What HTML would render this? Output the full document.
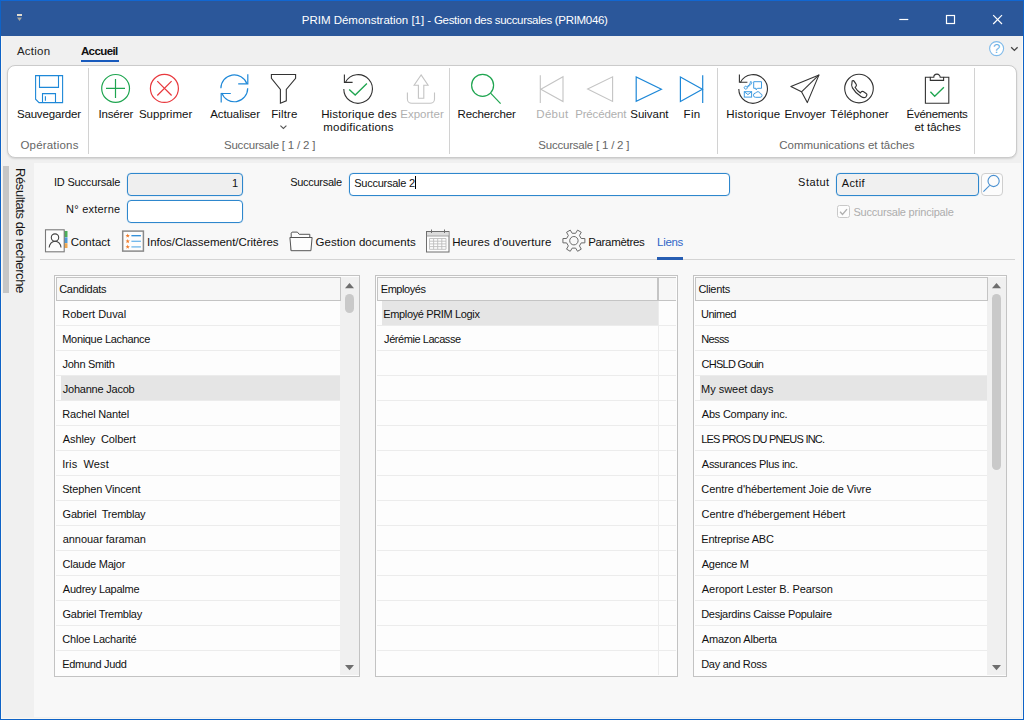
<!DOCTYPE html>
<html lang="fr"><head><meta charset="utf-8"><title>PRIM Démonstration [1] - Gestion des succursales (PRIM046)</title>
<style>
html,body{margin:0;padding:0;}
body{width:1024px;height:720px;overflow:hidden;position:relative;background:#f0f0f0;font-family:"Liberation Sans",sans-serif;}
.a{position:absolute;box-sizing:border-box;}
.t{position:absolute;white-space:pre;font-family:"Liberation Sans",sans-serif;}
svg{position:absolute;overflow:visible;}
.sep{position:absolute;top:68px;height:86px;width:1px;background:#d2d2d2;}
.inp{position:absolute;box-sizing:border-box;border:1px solid #2e87cd;border-radius:4px;height:23px;box-shadow:0 0 0 0.5px rgba(46,135,205,.14);}
.box{position:absolute;box-sizing:border-box;border:1px solid #c3c3c3;background:#fdfdfd;top:275px;height:402px;}
.hdr{position:absolute;box-sizing:border-box;border:1px solid #c4c4c4;background:#f7f7f7;top:277px;height:24px;}
.rl{position:absolute;height:1px;background:#ececec;}
.sel{position:absolute;height:24px;background:#e5e5e5;}
.trk{position:absolute;background:#f0f0f0;top:277px;height:398px;width:18px;}
.thumb{position:absolute;background:#c9c9c9;border-radius:5px;width:9px;}
</style></head><body>
<!-- window chrome -->
<div class="a" style="left:0;top:0;width:1024px;height:36px;background:#2b579a;"></div>
<div class="a" style="left:0;top:36px;width:1024px;height:684px;background:#f0f0f0;"></div>
<!-- content area -->
<div class="a" style="left:34px;top:163px;width:987px;height:554px;background:#f8f8f8;"></div>
<div class="a" style="left:1px;top:36px;width:1022px;height:683px;border:1px solid #fbf8f1;border-top:none;"></div>
<div class="a" style="left:3px;top:166px;width:6px;height:127px;background:#c6c6c6;"></div>
<!-- ribbon panel -->
<div class="a" style="left:7px;top:65px;width:1010px;height:93px;background:#fff;border:1px solid #cbcbcb;border-radius:8px;box-shadow:0 1px 2px rgba(0,0,0,.13);"></div>
<div class="sep" style="left:88px"></div><div class="sep" style="left:449px"></div><div class="sep" style="left:717px"></div><div class="sep" style="left:974px"></div>
<!-- tab underline -->
<div class="a" style="left:81px;top:60px;width:38px;height:2px;background:#185abd;"></div>
<!-- form inputs -->
<div class="inp" style="left:127px;top:173px;width:116px;background:#efefef;"></div>
<div class="inp" style="left:127px;top:200px;width:116px;background:#fff;"></div>
<div class="inp" style="left:349px;top:173px;width:381px;background:#fff;"></div>
<div class="a caret" style="left:415px;top:176px;width:1px;height:13px;background:#000;"></div>
<div class="inp" style="left:836px;top:173px;width:143px;background:#f0f0f0;"></div>
<div class="a" style="left:981px;top:173px;width:22px;height:23px;background:#fcfcfc;border:1px solid #cfcfcf;border-radius:4px;"></div>
<!-- checkbox -->
<div class="a" style="left:837px;top:205px;width:13px;height:13px;background:#fdfdfd;border:1px solid #c9c9c9;border-radius:2.500px;"></div>
<!-- tab strip line -->
<div class="a" style="left:40px;top:259px;width:975px;height:1px;background:#d4d4d4;"></div>
<div class="a" style="left:657px;top:257px;width:26px;height:3px;background:#265db2;"></div>
<!-- lists -->
<div class="box" style="left:54px;width:306px;"></div>
<div class="box" style="left:375px;width:303px;"></div>
<div class="box" style="left:693px;width:314px;"></div>
<div class="rl" style="left:56px;width:285px;top:325px"></div>
<div class="rl" style="left:56px;width:285px;top:350px"></div>
<div class="rl" style="left:56px;width:285px;top:375px"></div>
<div class="rl" style="left:56px;width:285px;top:400px"></div>
<div class="rl" style="left:56px;width:285px;top:425px"></div>
<div class="rl" style="left:56px;width:285px;top:450px"></div>
<div class="rl" style="left:56px;width:285px;top:475px"></div>
<div class="rl" style="left:56px;width:285px;top:500px"></div>
<div class="rl" style="left:56px;width:285px;top:525px"></div>
<div class="rl" style="left:56px;width:285px;top:550px"></div>
<div class="rl" style="left:56px;width:285px;top:575px"></div>
<div class="rl" style="left:56px;width:285px;top:600px"></div>
<div class="rl" style="left:56px;width:285px;top:625px"></div>
<div class="rl" style="left:56px;width:285px;top:650px"></div>
<div class="rl" style="left:377px;width:299px;top:325px"></div>
<div class="rl" style="left:377px;width:299px;top:350px"></div>
<div class="rl" style="left:377px;width:299px;top:375px"></div>
<div class="rl" style="left:377px;width:299px;top:400px"></div>
<div class="rl" style="left:377px;width:299px;top:425px"></div>
<div class="rl" style="left:377px;width:299px;top:450px"></div>
<div class="rl" style="left:377px;width:299px;top:475px"></div>
<div class="rl" style="left:377px;width:299px;top:500px"></div>
<div class="rl" style="left:377px;width:299px;top:525px"></div>
<div class="rl" style="left:377px;width:299px;top:550px"></div>
<div class="rl" style="left:377px;width:299px;top:575px"></div>
<div class="rl" style="left:377px;width:299px;top:600px"></div>
<div class="rl" style="left:377px;width:299px;top:625px"></div>
<div class="rl" style="left:377px;width:299px;top:650px"></div>
<div class="rl" style="left:695px;width:293px;top:325px"></div>
<div class="rl" style="left:695px;width:293px;top:350px"></div>
<div class="rl" style="left:695px;width:293px;top:375px"></div>
<div class="rl" style="left:695px;width:293px;top:400px"></div>
<div class="rl" style="left:695px;width:293px;top:425px"></div>
<div class="rl" style="left:695px;width:293px;top:450px"></div>
<div class="rl" style="left:695px;width:293px;top:475px"></div>
<div class="rl" style="left:695px;width:293px;top:500px"></div>
<div class="rl" style="left:695px;width:293px;top:525px"></div>
<div class="rl" style="left:695px;width:293px;top:550px"></div>
<div class="rl" style="left:695px;width:293px;top:575px"></div>
<div class="rl" style="left:695px;width:293px;top:600px"></div>
<div class="rl" style="left:695px;width:293px;top:625px"></div>
<div class="rl" style="left:695px;width:293px;top:650px"></div>
<div class="a" style="left:658px;top:301px;width:1px;height:374px;background:#ececec;"></div>
<div class="sel" style="left:61px;width:280px;top:376px"></div>
<div class="sel" style="left:382px;width:276px;top:301px"></div>
<div class="sel" style="left:700px;width:288px;top:376px"></div>
<div class="trk" style="left:340px;width:19px;"></div><div class="trk" style="left:987px;width:19px;"></div>
<div class="hdr" style="left:56px;width:285px;"></div>
<div class="hdr" style="left:377px;width:281px;"></div>
<div class="hdr" style="left:658px;width:18px;border-right:none;"></div>
<div class="hdr" style="left:695px;width:293px;"></div>
<div class="thumb" style="left:345px;top:294px;height:19px;"></div>
<div class="thumb" style="left:992px;top:294px;height:176px;"></div>
<!--ICONS_START--><svg width="1024" height="720" viewBox="0 0 1024 720" style="left:0;top:0" fill="none" stroke-width="1.1" stroke-linecap="butt" stroke-linejoin="miter">
<rect x="17" y="14" width="5" height="2" fill="#e2dccf" stroke="none"/><path d="M17 17.6h5l-2.5 3.4z" fill="#a8a8a0" stroke="none"/>
<g stroke="#fff" stroke-width="1.2"><path d="M899.3 19.5h9"/><rect x="946.5" y="15.5" width="8" height="8"/><path d="M993.2 15.2l8.8 8.8M1002 15.2l-8.8 8.8"/></g>
<circle cx="996.6" cy="48.6" r="7" stroke="#7fbaea" stroke-width="1.1" fill="#fff"/>
<path d="M1011.2 47.2l3.2 3.2l3.2-3.2" stroke="#444" stroke-width="1.3"/>
<g stroke="#1e88d8"><path d="M35.6 75.6h27v27h-23.6l-3.4-3.4z"/><path d="M39.5 75.6v11.8h19v-11.8"/><path d="M42.5 102.6v-9h13v9"/><path d="M45.4 96.2v4.6"/></g>
<g stroke="#1fa550" stroke-width="1.2"><circle cx="115.6" cy="88.4" r="13.9"/><path d="M106 88.4h19M115.5 78.9v19"/></g>
<g stroke="#e8383d" stroke-width="1.2"><circle cx="164.4" cy="88.4" r="14"/><path d="M157.3 81.1l14.3 14.4M171.6 81.1l-14.3 14.4"/></g>
<g stroke="#1e88d8" stroke-width="1.2"><path d="M220.9 88.3A13.4 13.4 0 0 1 246.9 83.7"/><path d="M247.8 74.2v9.6h-9.6"/><path d="M247.7 88.3A13.4 13.4 0 0 1 221.7 92.9"/><path d="M221.2 102.6v-9.1h9.6"/></g>
<path d="M271.4 74.5h24.2v3.8l-9.3 11.2v11.3l-5.9 2.4v-13.7l-9-11.2z" stroke="#333"/>
<path d="M280.4 125.6l3 2.9l3-2.9" stroke="#555" stroke-width="1.1"/>
<g stroke="#333"><path d="M345.4 82.4A14.3 14.3 0 1 1 343.8 88.9"/><path d="M344.4 74.4v8h8.2"/></g>
<path d="M349.2 89.4l6 5.7l11.7-11.5" stroke="#1fa550" stroke-width="1.35"/>
<g stroke="#c4c4c4"><path d="M407.4 92.4v6.5a4.4 4.4 0 0 0 4.4 4.4h18.3a4.4 4.4 0 0 0 4.4-4.4v-6.5"/><path d="M421.1 74.9l7 10.4h-4.3v12.9h-5.4v-12.9h-4.3z"/></g>
<g stroke="#1fa550" stroke-width="1.2"><circle cx="482.6" cy="85.3" r="11"/><path d="M490.6 93.2l10 10.4"/></g>
<g stroke="#c4c4c4"><path d="M540.3 75.3v27.8M563 76.8v24.8l-22.2-12.4z"/><path d="M612.6 76.8v24.6l-25-12.3z"/></g>
<g stroke="#1e88d8" stroke-width="1.2"><path d="M636.2 77v24.4l25.2-12.2z"/><path d="M680.4 77v24.4l22-12.2z"/><path d="M702.7 75.3v27.8"/></g>
<g stroke="#333"><path d="M740.4 82.4A14.3 14.3 0 1 1 738.8 88.9"/><path d="M739.4 74.4v7.9h8"/></g>
<g stroke="#3f9ce2" stroke-width="1"><path d="M750.3 81.7c1-.6 1.9.6 1.3 1.5c-1 1.9-2.6 3.2-4.6 4.3c.4 1.3-.8 2-1.9 1.5c-1-.5-1.3-1.700-.3-2.500c.7-.5 1.500-.3 2.000.2c1.800-.9 3-2.200 3.500-4z"/><path d="M753.7 81.700h7.800v6.600h-4l-1.400 1.600v-1.600h-2.400z"/><rect x="744.300" y="91.700" width="7.300" height="5.400"/><path d="M744.300 91.700l3.650 2.900l3.650-2.900"/><path d="M755.500 97.300h4.600a1.800 1.800 0 0 0 .2-3.600a2.500 2.500 0 0 0-4.700-.6a2.100 2.100 0 0 0-.1 4.200z"/></g>
<g stroke="#333" stroke-linejoin="round"><path d="M819 74.900l-28.100 11.600l10.600 5.300l5.800 10.800z"/><path d="M801.500 91.800l17.500-16.900"/></g>
<g stroke="#333"><circle cx="859" cy="88.600" r="14.300"/><path transform="translate(859.2 88.400) scale(1.040 1.090) translate(-859.2 -88.400) translate(0 1.300)" d="M852.200 82.400c-.6 1.300-.4 2.700.5 4.200c1.700 2.900 4.600 5.800 8.200 8c1.800 1.100 3.500 1.300 4.600.5l.9-1.500c.4-.7.200-1.500-.5-1.900l-2.800-1.700c-.7-.4-1.500-.3-2 .3l-.8.900c-2.100-1.200-3.900-3-5.100-5.100l.9-.9c.5-.6.600-1.400.1-2l-1.800-2.600c-.5-.7-1.400-.8-2-.3z"/></g>
<g stroke="#333"><path d="M930.300 77.300h-4.900v25.900h23.400v-25.900h-5.200"/><path d="M930.300 77.300v3.100h13.300v-3.100h-3.400a3.200 3.200 0 0 0-6.400 0z"/></g>
<path d="M930.400 91.700l4.300 4.600l9.200-9.100" stroke="#1fa550" stroke-width="1.350"/>
<g stroke="#4a90d0" stroke-width="1.100"><circle cx="993.600" cy="181" r="5.600"/><path d="M989.700 185.300l-6.300 6.300"/></g>
<path d="M840.100 211.800l2.400 2.600l4.500-5.300" stroke="#b0b0b0" stroke-width="1.400"/>
<rect x="64" y="231" width="3.500" height="6" fill="#4cae5a" stroke="none"/><rect x="64" y="237.300" width="3.500" height="5.700" fill="#4f9bd8" stroke="none"/><rect x="64" y="243.200" width="3.500" height="4.800" fill="#f0a850" stroke="none"/>
<rect x="45.500" y="229.800" width="18.700" height="22" fill="#fdfdfd" stroke="#7a7a7a" stroke-width="1.100"/>
<g stroke="#444" stroke-width="1.100"><circle cx="55" cy="237.600" r="3.700"/><path d="M49.200 247.600a5.900 6.400 0 0 1 11.800 0"/></g>
<rect x="122.700" y="231.100" width="20.700" height="20" fill="#fdfdfd" stroke="#8a8a8a" stroke-width="1.500"/>
<polygon points="127.70,233.40 128.26,234.93 129.89,234.99 128.60,235.99 129.05,237.56 127.70,236.65 126.35,237.56 126.80,235.99 125.51,234.99 127.14,234.93" fill="#f07a28" stroke="none"/>
<path d="M131.400 235.7h9.500" stroke="#2b8cd8" stroke-width="1.300"/>
<polygon points="127.70,239.00 128.26,240.53 129.89,240.59 128.60,241.59 129.05,243.16 127.70,242.25 126.35,243.16 126.80,241.59 125.51,240.59 127.14,240.53" fill="#f07a28" stroke="none"/>
<path d="M131.400 241.3h9.500" stroke="#6db6ea" stroke-width="1.300"/>
<polygon points="127.70,244.60 128.26,246.13 129.89,246.19 128.60,247.19 129.05,248.76 127.70,247.85 126.35,248.76 126.80,247.19 125.51,246.19 127.14,246.13" fill="#f07a28" stroke="none"/>
<path d="M131.400 246.9h9.500" stroke="#6db6ea" stroke-width="1.300"/>
<g stroke="#555" stroke-width="1" fill="#fdfdfd"><path d="M291.200 250.500v-17.400l.9-1h5.300l1.800 2.200h10.600v3.500"/><path d="M289.900 237.500h22.200l-1.200 13.200h-19.800z"/></g>
<g><rect x="426.500" y="231.500" width="22.500" height="20.500" fill="#fdfdfd" stroke="#6e6e6e" stroke-width="1"/><rect x="427" y="232" width="21.500" height="3.800" fill="#dcdcdc" stroke="none"/><path d="M426.500 236h22.500" stroke="#8a8a8a" stroke-width="0.8"/>
<path d="M431.500 229.500v3.500M444.500 229.500v3.500" stroke="#6e6e6e" stroke-width="1"/>
<path d="M429.500 238.5h16.500M429.500 241.2h16.500M429.500 243.9h16.500M429.500 246.6h16.500M429.500 249.3h16.500M429.5 238.500v10.800M433.6 238.500v10.800M437.7 238.500v10.800M441.8 238.500v10.800M446 238.500v10.800" stroke="#bdbdbd" stroke-width="0.9"/></g>
<path d="M581.17 238.48L584.89 238.56L584.89 242.84L581.17 242.92L579.46 245.88L581.25 249.15L577.55 251.29L575.61 248.11L572.19 248.11L570.25 251.29L566.55 249.15L568.34 245.88L566.63 242.92L562.91 242.84L562.91 238.56L566.63 238.48L568.34 235.52L566.55 232.25L570.25 230.11L572.19 233.29L575.61 233.29L577.55 230.11L581.25 232.25L579.46 235.52z" stroke="#6a6a6a" stroke-width="1" stroke-linejoin="round"/><circle cx="573.9" cy="240.7" r="4.200" stroke="#6a6a6a" stroke-width="1"/>
<path d="M345.0 288.200h9l-4.500-5.200z" fill="#6e6e6e" stroke="none"/><path d="M345.0 665h9l-4.500 5.200z" fill="#6e6e6e" stroke="none"/>
<path d="M992.0 288.200h9l-4.500-5.200z" fill="#6e6e6e" stroke="none"/><path d="M992.0 665h9l-4.500 5.200z" fill="#6e6e6e" stroke="none"/>
</svg><!--ICONS_END-->
<!-- window border -->
<div class="a" style="left:0;top:0;width:1024px;height:720px;border:1px solid #0f63c7;border-top-color:#1167d2;pointer-events:none;"></div>
<span class="t" id="vt" style="left:28.1px;top:167.8px;font-size:13px;line-height:16px;color:#151515;letter-spacing:-0.4px;transform-origin:0 0;transform:rotate(90deg);">Résultats de recherche</span>
<span class="t" id="hq" style="left:992.9px;top:41.3px;font-size:13px;line-height:15px;color:#6ab0e4;">?</span>
<span class="t" style="left:301.80px;top:12.52px;font-size:11.5px;line-height:15px;color:#fff;letter-spacing:-0.016px;">PRIM Démonstration [1] -</span>
<span class="t" style="left:433.93px;top:12.52px;font-size:11.5px;line-height:15px;color:#fff;letter-spacing:-0.315px;">Gestion des succursales (PRIM046)</span>
<span class="t" style="left:16.97px;top:43.52px;font-size:11.5px;line-height:15px;color:#222;letter-spacing:0.228px;">Action</span>
<span class="t" style="left:80.92px;top:43.52px;font-size:11.5px;line-height:15px;color:#111;font-weight:700;letter-spacing:-0.592px;">Accueil</span>
<span class="t" style="left:16.89px;top:106.52px;font-size:11.5px;line-height:15px;color:#111;letter-spacing:-0.154px;">Sauvegarder</span>
<span class="t" style="left:98.43px;top:106.52px;font-size:11.5px;line-height:15px;color:#111;letter-spacing:-0.146px;">Insérer</span>
<span class="t" style="left:138.89px;top:106.52px;font-size:11.5px;line-height:15px;color:#111;letter-spacing:0.058px;">Supprimer</span>
<span class="t" style="left:210.15px;top:106.52px;font-size:11.5px;line-height:15px;color:#111;letter-spacing:-0.073px;">Actualiser</span>
<span class="t" style="left:271.15px;top:106.52px;font-size:11.5px;line-height:15px;color:#111;letter-spacing:0.128px;">Filtre</span>
<span class="t" style="left:321.15px;top:106.52px;font-size:11.5px;line-height:15px;color:#111;letter-spacing:0.156px;">Historique des</span>
<span class="t" style="left:323.23px;top:119.52px;font-size:11.5px;line-height:15px;color:#111;letter-spacing:0.267px;">modifications</span>
<span class="t" style="left:400.30px;top:106.52px;font-size:11.5px;line-height:15px;color:#b0b0b0;letter-spacing:-0.007px;">Exporter</span>
<span class="t" style="left:457.62px;top:106.52px;font-size:11.5px;line-height:15px;color:#111;letter-spacing:-0.146px;">Rechercher</span>
<span class="t" style="left:536.33px;top:106.52px;font-size:11.5px;line-height:15px;color:#b0b0b0;letter-spacing:0.288px;">Début</span>
<span class="t" style="left:575.15px;top:106.52px;font-size:11.5px;line-height:15px;color:#b0b0b0;letter-spacing:-0.154px;">Précédent</span>
<span class="t" style="left:630.24px;top:106.52px;font-size:11.5px;line-height:15px;color:#111;letter-spacing:-0.007px;">Suivant</span>
<span class="t" style="left:683.62px;top:106.52px;font-size:11.5px;line-height:15px;color:#111;letter-spacing:0.268px;">Fin</span>
<span class="t" style="left:726.15px;top:106.52px;font-size:11.5px;line-height:15px;color:#111;letter-spacing:0.257px;">Historique</span>
<span class="t" style="left:784.62px;top:106.52px;font-size:11.5px;line-height:15px;color:#111;letter-spacing:-0.175px;">Envoyer</span>
<span class="t" style="left:830.23px;top:106.52px;font-size:11.5px;line-height:15px;color:#111;letter-spacing:0.029px;">Téléphoner</span>
<span class="t" style="left:906.62px;top:106.52px;font-size:11.5px;line-height:15px;color:#111;letter-spacing:-0.296px;">Événements</span>
<span class="t" style="left:914.40px;top:119.52px;font-size:11.5px;line-height:15px;color:#111;letter-spacing:-0.046px;">et tâches</span>
<span class="t" style="left:20.43px;top:137.52px;font-size:11.5px;line-height:15px;color:#666;letter-spacing:0.192px;">Opérations</span>
<span class="t" style="left:223.95px;top:137.52px;font-size:11.5px;line-height:15px;color:#666;letter-spacing:-0.196px;">Succursale [ 1 / 2 ]</span>
<span class="t" style="left:538.25px;top:137.52px;font-size:11.5px;line-height:15px;color:#666;letter-spacing:-0.212px;">Succursale [ 1 / 2 ]</span>
<span class="t" style="left:779.22px;top:137.52px;font-size:11.5px;line-height:15px;color:#666;letter-spacing:-0.011px;">Communications et tâches</span>
<span class="t" style="left:53.88px;top:174.69px;font-size:11px;line-height:15px;color:#111;letter-spacing:-0.171px;">ID Succursale</span>
<span class="t" style="left:66.10px;top:201.69px;font-size:11px;line-height:15px;color:#111;letter-spacing:0.219px;">N° externe</span>
<span class="t" style="left:231.94px;top:175.69px;font-size:11px;line-height:15px;color:#111;letter-spacing:0.000px;">1</span>
<span class="t" style="left:290.19px;top:174.69px;font-size:11px;line-height:15px;color:#111;letter-spacing:-0.289px;">Succursale</span>
<span class="t" style="left:354.19px;top:175.69px;font-size:11px;line-height:15px;color:#111;letter-spacing:-0.246px;">Succursale 2</span>
<span class="t" style="left:798.12px;top:174.69px;font-size:11px;line-height:15px;color:#111;letter-spacing:0.460px;">Statut</span>
<span class="t" style="left:841.87px;top:175.69px;font-size:11px;line-height:15px;color:#111;letter-spacing:0.313px;">Actif</span>
<span class="t" style="left:853.44px;top:204.69px;font-size:11px;line-height:15px;color:#adadad;letter-spacing:-0.208px;">Succursale principale</span>
<span class="t" style="left:70.63px;top:234.52px;font-size:11.5px;line-height:15px;color:#111;letter-spacing:0.008px;">Contact</span>
<span class="t" style="left:147.03px;top:234.52px;font-size:11.5px;line-height:15px;color:#111;letter-spacing:-0.032px;">Infos/Classement/Critères</span>
<span class="t" style="left:315.53px;top:234.52px;font-size:11.5px;line-height:15px;color:#111;letter-spacing:0.067px;">Gestion documents</span>
<span class="t" style="left:452.15px;top:234.52px;font-size:11.5px;line-height:15px;color:#111;letter-spacing:0.103px;">Heures d'ouverture</span>
<span class="t" style="left:588.15px;top:234.52px;font-size:11.5px;line-height:15px;color:#111;letter-spacing:-0.309px;">Paramètres</span>
<span class="t" style="left:657.09px;top:234.52px;font-size:11.5px;line-height:15px;color:#2f66c8;letter-spacing:-0.325px;">Liens</span>
<span class="t" style="left:59.16px;top:281.69px;font-size:11px;line-height:15px;color:#111;letter-spacing:-0.265px;">Candidats</span>
<span class="t" style="left:380.76px;top:281.69px;font-size:11px;line-height:15px;color:#111;letter-spacing:-0.453px;">Employés</span>
<span class="t" style="left:698.44px;top:281.69px;font-size:11px;line-height:15px;color:#111;letter-spacing:-0.299px;">Clients</span>
<span class="t" style="left:62.25px;top:306.69px;font-size:11px;line-height:15px;color:#111;letter-spacing:-0.028px;">Robert Duval</span>
<span class="t" style="left:62.28px;top:331.69px;font-size:11px;line-height:15px;color:#111;letter-spacing:-0.325px;">Monique Lachance</span>
<span class="t" style="left:62.59px;top:356.69px;font-size:11px;line-height:15px;color:#111;letter-spacing:-0.296px;">John Smith</span>
<span class="t" style="left:62.70px;top:381.69px;font-size:11px;line-height:15px;color:#111;letter-spacing:-0.215px;">Johanne Jacob</span>
<span class="t" style="left:62.25px;top:406.69px;font-size:11px;line-height:15px;color:#111;letter-spacing:-0.177px;">Rachel Nantel</span>
<span class="t" style="left:62.87px;top:431.69px;font-size:11px;line-height:15px;color:#111;letter-spacing:-0.119px;">Ashley  Colbert</span>
<span class="t" style="left:62.18px;top:456.69px;font-size:11px;line-height:15px;color:#111;letter-spacing:0.104px;">Iris  West</span>
<span class="t" style="left:62.18px;top:481.69px;font-size:11px;line-height:15px;color:#111;letter-spacing:-0.151px;">Stephen Vincent</span>
<span class="t" style="left:62.57px;top:506.69px;font-size:11px;line-height:15px;color:#111;letter-spacing:-0.238px;">Gabriel  Tremblay</span>
<span class="t" style="left:62.64px;top:531.69px;font-size:11px;line-height:15px;color:#111;letter-spacing:-0.034px;">annouar faraman</span>
<span class="t" style="left:62.61px;top:556.69px;font-size:11px;line-height:15px;color:#111;letter-spacing:-0.249px;">Claude Major</span>
<span class="t" style="left:62.87px;top:581.69px;font-size:11px;line-height:15px;color:#111;letter-spacing:-0.267px;">Audrey Lapalme</span>
<span class="t" style="left:62.57px;top:606.69px;font-size:11px;line-height:15px;color:#111;letter-spacing:-0.273px;">Gabriel Tremblay</span>
<span class="t" style="left:62.35px;top:631.69px;font-size:11px;line-height:15px;color:#111;letter-spacing:-0.197px;">Chloe Lacharité</span>
<span class="t" style="left:62.25px;top:656.69px;font-size:11px;line-height:15px;color:#111;letter-spacing:-0.327px;">Edmund Judd</span>
<span class="t" style="left:383.25px;top:306.69px;font-size:11px;line-height:15px;color:#111;letter-spacing:-0.356px;">Employé PRIM Logix</span>
<span class="t" style="left:384.11px;top:331.69px;font-size:11px;line-height:15px;color:#111;letter-spacing:-0.441px;">Jérémie Lacasse</span>
<span class="t" style="left:701.04px;top:306.69px;font-size:11px;line-height:15px;color:#111;letter-spacing:-0.497px;">Unimed</span>
<span class="t" style="left:701.25px;top:331.69px;font-size:11px;line-height:15px;color:#111;letter-spacing:-0.623px;">Nesss</span>
<span class="t" style="left:701.53px;top:356.69px;font-size:11px;line-height:15px;color:#111;letter-spacing:-0.726px;">CHSLD Gouin</span>
<span class="t" style="left:701.11px;top:381.69px;font-size:11px;line-height:15px;color:#111;letter-spacing:-0.037px;">My sweet days</span>
<span class="t" style="left:701.87px;top:406.69px;font-size:11px;line-height:15px;color:#111;letter-spacing:-0.241px;">Abs Company inc.</span>
<span class="t" style="left:701.20px;top:431.69px;font-size:11px;line-height:15px;color:#111;letter-spacing:-0.765px;">LES PROS DU PNEUS INC.</span>
<span class="t" style="left:701.87px;top:456.69px;font-size:11px;line-height:15px;color:#111;letter-spacing:-0.308px;">Assurances Plus inc.</span>
<span class="t" style="left:701.31px;top:481.69px;font-size:11px;line-height:15px;color:#111;letter-spacing:-0.076px;">Centre d'hébertement Joie de Vivre</span>
<span class="t" style="left:701.53px;top:506.69px;font-size:11px;line-height:15px;color:#111;letter-spacing:-0.051px;">Centre d'hébergement Hébert</span>
<span class="t" style="left:701.25px;top:531.69px;font-size:11px;line-height:15px;color:#111;letter-spacing:-0.199px;">Entreprise ABC</span>
<span class="t" style="left:701.87px;top:556.69px;font-size:11px;line-height:15px;color:#111;letter-spacing:-0.343px;">Agence M</span>
<span class="t" style="left:701.87px;top:581.69px;font-size:11px;line-height:15px;color:#111;letter-spacing:-0.092px;">Aeroport Lester B. Pearson</span>
<span class="t" style="left:701.20px;top:606.69px;font-size:11px;line-height:15px;color:#111;letter-spacing:-0.278px;">Desjardins Caisse Populaire</span>
<span class="t" style="left:701.87px;top:631.69px;font-size:11px;line-height:15px;color:#111;letter-spacing:-0.201px;">Amazon Alberta</span>
<span class="t" style="left:701.20px;top:656.69px;font-size:11px;line-height:15px;color:#111;letter-spacing:-0.294px;">Day and Ross</span>
</body></html>
